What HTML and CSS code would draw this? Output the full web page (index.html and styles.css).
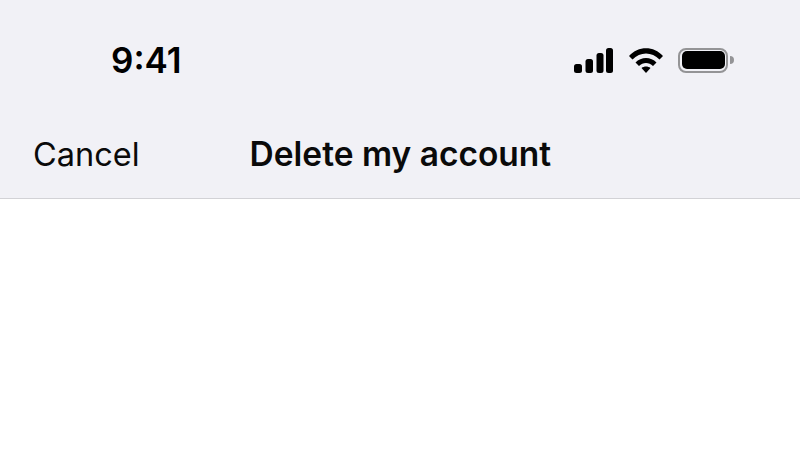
FILE: index.html
```html
<!DOCTYPE html>
<html lang="en">
<head>
    <meta charset="UTF-8">
    <meta name="viewport" content="width=device-width, initial-scale=1.0">
    <title>Delete my account</title>
    <link rel="stylesheet" href="styles.css">
</head>
<body>
    <header class="top">
        <!-- status bar -->
        <div class="status">
            <span class="clock">9:41</span>
            <div class="status-icons">
                <svg class="signal" width="39" height="25" viewBox="0 0 39 25">
                    <rect x="0" y="16" width="8" height="9" rx="2.5"/>
                    <rect x="11.500" y="11" width="7.500" height="14" rx="2.500"/>
                    <rect x="22.500" y="5" width="7" height="20" rx="2.500"/>
                    <rect x="32" y="0" width="7" height="25" rx="2.500"/>
                </svg>
                <svg class="wifi" width="34" height="25" viewBox="0 0 34 25">
                    <path d="M0 8 C9 -2.500 25 -2.500 34 8 L30.500 11.500 C23 3.500 11 3.500 3.500 11.500 Z"/>
                    <path d="M6.500 14.500 C12 8.500 22 8.500 27.500 14.500 L24 18 C20 14 14 14 10 18 Z"/>
                    <path d="M12.500 20 C15 18 19 18 21.500 20 L17 25 Z"/>
                </svg>
                <div class="battery">
                    <div class="battery-shell"><div class="battery-fill"></div></div>
                    <div class="battery-cap"></div>
                </div>
            </div>
        </div>
        <!-- nav bar -->
        <nav class="nav">
            <span class="cancel">Cancel</span>
            <span class="title">Delete my account</span>
        </nav>
    </header>
    <main class="content"></main>
</body>
</html>
```

FILE: styles.css
```css
/* page */
html, body {
    height: 100%;
}

body {
    margin: 0;
    background-color: #FFFFFF;
    color: #0A0A0A;
    font-family: 'Inter', 'Liberation Sans', sans-serif;
    overflow: hidden;
}

.top {
    height: 199px;
    box-sizing: border-box;
    background-color: #F1F1F6;
    border-bottom: 1px solid #D2D2D6;
    display: flex;
    flex-direction: column;
}

/* status bar */
.status {
    display: flex;
    justify-content: space-between;
    align-items: center;
    height: 60px;
    margin-top: 30px;
    padding: 0 66px 0 111px;
}

.clock {
    font-size: 35px;
    font-weight: 600;
    color: #000000;
}

.status-icons {
    display: flex;
    align-items: center;
    gap: 15px;
}

.signal {
    margin-right: 1px;
}

.signal, .wifi {
    fill: #000000;
    display: block;
}

.battery {
    display: flex;
    align-items: center;
    gap: 2px;
}

.battery-shell {
    width: 43px;
    height: 18px;
    padding: 1.500px;
    border: 2px solid #949496;
    border-radius: 8px;
}

.battery-fill {
    width: 100%;
    height: 100%;
    background-color: #000000;
    border-radius: 5px;
}

.battery-cap {
    width: 4px;
    height: 8px;
    background-color: #949496;
    border-radius: 0 4px 4px 0;
}

/* nav bar */
.nav {
    display: flex;
    align-items: center;
    height: 60px;
    margin-top: 34px;
    padding-left: 33px;
}

.cancel {
    font-size: 32.500px;
    font-weight: 400;
}

.title {
    font-size: 33.500px;
    font-weight: 600;
    margin-left: 110px;
}

.content {
    flex: 1;
}
```
